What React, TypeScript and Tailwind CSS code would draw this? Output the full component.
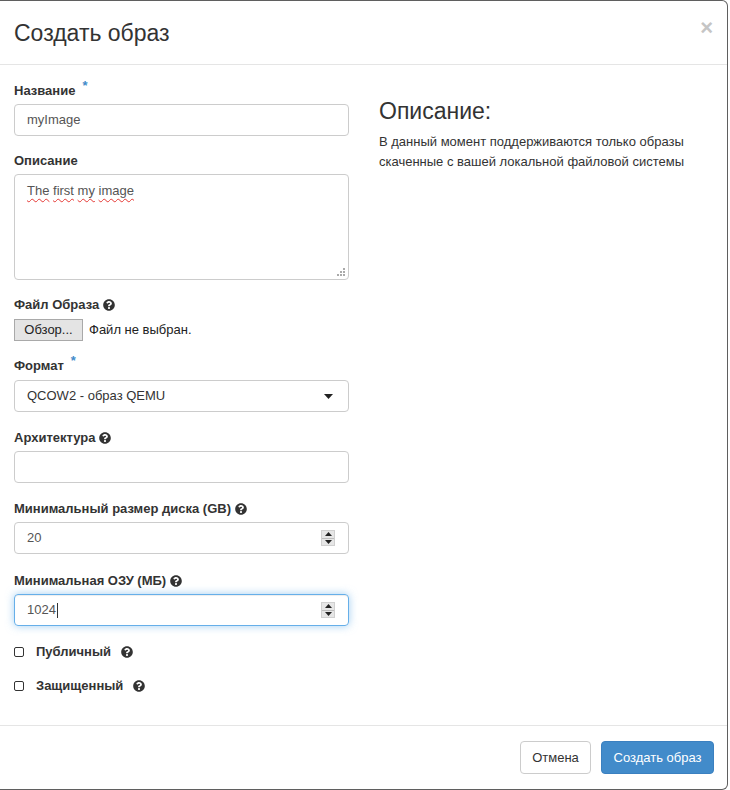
import React from "react";
import { FaQuestionCircle } from "react-icons/fa";

const Help = ({ className = "" }: { className?: string }) => (
  <FaQuestionCircle className={`inline-block text-[#333] w-[12px] h-[12px] ${className}`} />
);

const Star = () => (
  <span className="relative -top-[6px] ml-[3px] text-[#428bca] text-[13px] font-bold leading-none">*</span>
);

const Spinner = () => (
  <div className="flex flex-col w-[14px] h-[16px] bg-[#e6e6e6] border border-[#d0d0d0]">
    <div className="flex-1 flex items-center justify-center border-b border-[#bdbdbd]">
      <svg width="7" height="4" viewBox="0 0 7 4"><path d="M0 4 L3.5 0 L7 4 Z" fill="#222" /></svg>
    </div>
    <div className="flex-1 flex items-center justify-center">
      <svg width="7" height="4" viewBox="0 0 7 4"><path d="M0 0 L3.5 4 L7 0 Z" fill="#222" /></svg>
    </div>
  </div>
);

const Label = ({ children, mb = "mb-[4px]" }: { children: React.ReactNode; mb?: string }) => (
  <div className={`flex items-center gap-[4px] h-[18px] leading-[18px] font-bold text-[13px] text-[#333] ${mb}`}>{children}</div>
);

export default function App() {
  return (
    <div className="w-[730px] h-[790px] bg-white font-['Liberation_Sans',Arial,sans-serif] text-[13px] text-[#333]">
      <div className="w-[728px] h-[790px] border-t border-r border-b border-[#5f5f5f] rounded-tr-[6px] rounded-br-[6px] flex flex-col">
        {/* header */}
        <div className="h-[64px] border-b border-[#e5e5e5] flex items-center justify-between pl-[14px] pr-[14px] shrink-0">
          <div className="text-[23px] leading-none text-[#333] pt-[2px]">Создать образ</div>
          <div className="text-[22px] font-bold leading-none text-[#c5c5c5] -mt-[10px]">×</div>
        </div>

        {/* body */}
        <div className="flex-1 flex pl-[14px] pt-[17px]">
          <div className="w-[335px] shrink-0 flex flex-col">
            <Label>
              <span>Название</span>
              <Star />
            </Label>
            <div className="h-[32px] border border-[#ccc] rounded-[4px] px-[12px] flex items-center text-[#555] mb-[16px]">myImage</div>

            <Label>Описание</Label>
            <div className="relative h-[106px] border border-[#ccc] rounded-[4px] px-[12px] pt-[6px] text-[#555] mb-[16px]">
              <span className="underline decoration-wavy decoration-[#e53935] decoration-1 underline-offset-[3px]">The</span>{" "}
              <span className="underline decoration-wavy decoration-[#e53935] decoration-1 underline-offset-[3px]">first</span>{" "}
              <span className="underline decoration-wavy decoration-[#e53935] decoration-1 underline-offset-[3px]">my</span>{" "}
              <span className="underline decoration-wavy decoration-[#e53935] decoration-1 underline-offset-[3px]">image</span>
              <svg className="absolute right-[3px] bottom-[3px]" width="8" height="8" viewBox="0 0 8 8">
                <rect x="6" y="0" width="2" height="2" fill="#aaa" />
                <rect x="3" y="3" width="2" height="2" fill="#aaa" />
                <rect x="6" y="3" width="2" height="2" fill="#aaa" />
                <rect x="0" y="6" width="2" height="2" fill="#aaa" />
                <rect x="3" y="6" width="2" height="2" fill="#aaa" />
                <rect x="6" y="6" width="2" height="2" fill="#aaa" />
              </svg>
            </div>

            <Label mb="mb-[5px]">
              <span>Файл Образа</span>
              <Help />
            </Label>
            <div className="flex items-center h-[22px] mb-[16px]">
              <div className="h-[22px] w-[69px] flex items-center justify-center bg-[#e4e4e4] border border-[#a9a9a9] text-[13px] text-[#222]">Обзор...</div>
              <span className="ml-[6px] text-[#222]">Файл не выбран.</span>
            </div>

            <Label mb="mb-[5px]">
              <span>Формат</span>
              <Star />
            </Label>
            <div className="h-[32px] border border-[#ccc] rounded-[4px] pl-[12px] pr-[15px] flex items-center justify-between text-[#333] mb-[17px]">
              <span>QCOW2 - образ QEMU</span>
              <svg width="9" height="5" viewBox="0 0 9 5"><path d="M0 0 L9 0 L4.5 5 Z" fill="#222" /></svg>
            </div>

            <Label>
              <span>Архитектура</span>
              <Help />
            </Label>
            <div className="h-[32px] border border-[#ccc] rounded-[4px] mb-[17px]" />

            <Label>
              <span>Минимальный размер диска (GB)</span>
              <Help />
            </Label>
            <div className="h-[32px] border border-[#ccc] rounded-[4px] pl-[12px] pr-[13px] flex items-center justify-between text-[#555] mb-[18px]">
              <span>20</span>
              <Spinner />
            </div>

            <Label>
              <span>Минимальная ОЗУ (МБ)</span>
              <Help />
            </Label>
            <div className="h-[32px] border border-[#66afe9] rounded-[4px] pl-[12px] pr-[13px] flex items-center justify-between text-[#555] shadow-[inset_0_1px_1px_rgba(0,0,0,0.075),0_0_8px_rgba(102,175,233,0.6)]">
              <span className="flex items-center">
                1024<span className="inline-block w-[1px] h-[15px] bg-[#333] ml-[1px]" />
              </span>
              <Spinner />
            </div>

            <div className="flex items-center h-[18px] mt-[17px]">
              <div className="w-[10px] h-[10px] border border-[#333] rounded-[2px]" />
              <span className="ml-[12px] font-bold">Публичный</span>
              <Help className="ml-[10px]" />
            </div>
            <div className="flex items-center h-[18px] mt-[16px]">
              <div className="w-[10px] h-[10px] border border-[#333] rounded-[2px]" />
              <span className="ml-[12px] font-bold">Защищенный</span>
              <Help className="ml-[10px]" />
            </div>
          </div>

          <div className="ml-[30px] pt-[17px] flex flex-col">
            <div className="text-[23px] leading-[25px] text-[#333] mb-[8px]">Описание:</div>
            <div className="text-[13px] leading-[20px] text-[#333]">
              В данный момент поддерживаются только образы
              <br />
              скаченные с вашей локальной файловой системы
            </div>
          </div>
        </div>

        {/* footer */}
        <div className="h-[64px] border-t border-[#e5e5e5] flex items-center justify-end gap-[10px] pr-[13px] shrink-0">
          <div className="h-[33px] w-[71px] border border-[#ccc] rounded-[4px] flex items-center justify-center text-[#333] text-[13px] bg-white">Отмена</div>
          <div className="h-[33px] w-[113px] border border-[#3b80c0] rounded-[4px] flex items-center justify-center text-white text-[13px] bg-[#428bca]">Создать образ</div>
        </div>
      </div>
    </div>
  );
}
